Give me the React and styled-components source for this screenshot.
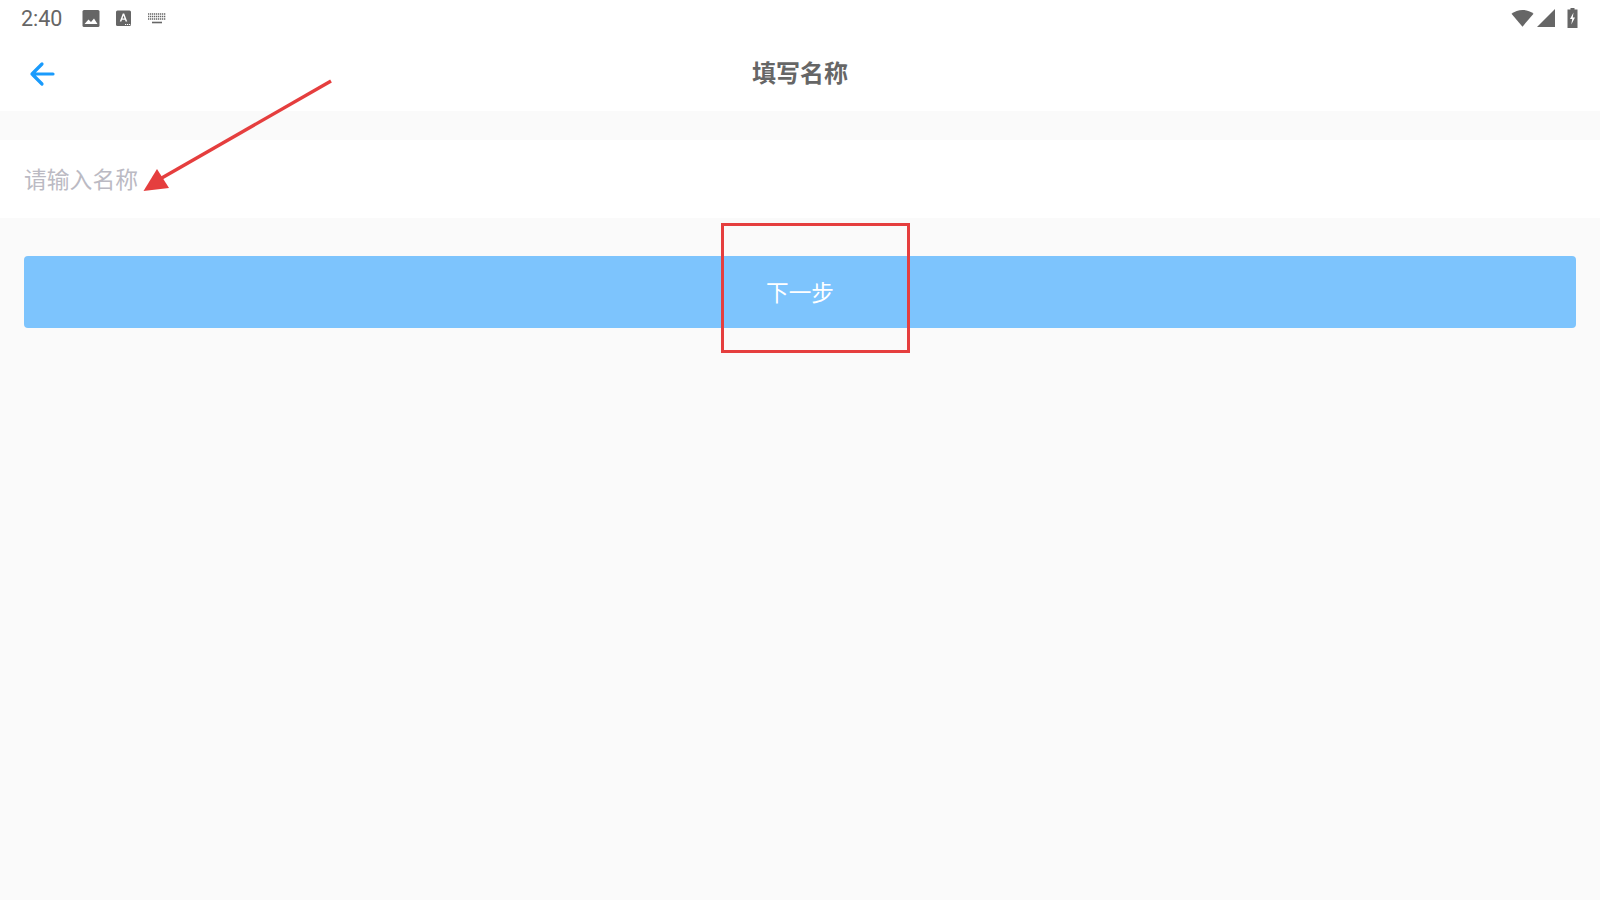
import React from "react";
import styled, { createGlobalStyle } from "styled-components";

const Global = createGlobalStyle`
  html, body { margin: 0; padding: 0; background: #fafafa; }
  #root { width: 1600px; height: 900px; overflow: hidden; }
`;
const CJK = `"Roboto", "Noto Sans CJK SC", sans-serif`;

const Page = styled.div`
  position: relative; width: 1600px; height: 900px; background: #fafafa;
  font-family: ${CJK}; display: flex; flex-direction: column;
`;
const StatusBar = styled.div`
  height: 36px; background: #fff; display: flex; align-items: center;
  justify-content: space-between; padding: 0 22px 0 21px; color: #666;
`;
const StatusGroup = styled.div`
  display: flex; align-items: center;
`;
const Time = styled.span`
  font-size: 21.5px; width: 61px; color: #666;
`;
const Header = styled.header`
  height: 75px; background: #fff; display: flex; align-items: center;
  justify-content: center; position: relative; margin-bottom: 29px;
`;
const BackButton = styled.button`
  position: absolute; left: 28px; top: 23px; width: 30px; height: 30px;
  padding: 0; border: 0; background: none; display: flex;
`;
const Title = styled.h1`
  margin: 0; font-size: 24px; font-weight: 700; color: #666; line-height: 1;
`;
const InputRow = styled.div`
  height: 78px; background: #fff; display: flex; align-items: center; padding: 4px 24px 0;
  box-sizing: border-box; margin-bottom: 38px;
`;
const NameInput = styled.input`
  flex: 1; border: 0; outline: 0; padding: 0; background: none; font-family: ${CJK};
  font-size: 22.8px; line-height: 1.4; color: #333;
  &::placeholder { color: #bbbac3; opacity: 1; }
`;
const NextButton = styled.button`
  margin: 0 24px; height: 72px; border: 0; border-radius: 4px; background: #7dc4fd;
  color: #fff; font-family: ${CJK}; font-size: 22.6px; padding: 0 0 1px;
`;
const HighlightBox = styled.div`
  position: absolute; left: 721px; top: 223px; width: 189px; height: 130px;
  box-sizing: border-box; border: 3px solid #e53e3e; pointer-events: none;
`;
const ArrowLayer = styled.svg`
  position: absolute; left: 0; top: 0; pointer-events: none;
`;

export default function App() {
  return (
    <Page>
      <Global />
      <StatusBar>
        <StatusGroup>
          <Time>2:40</Time>
          <StatusGroup>
            <svg width="18" height="18" viewBox="0 0 18 18">
              <rect x="0.5" y="1" width="17" height="17" rx="1.5" fill="#666" />
              <path d="M2.5 15 L6.5 10.5 L9 13 L12 9.5 L15.5 15 Z" fill="#fff" />
            </svg>
            <svg width="16" height="16" viewBox="0 0 16 16" style={{ marginLeft: 16 }}>
              <rect x="0" y="0.5" width="15" height="15.5" rx="1.5" fill="#666" />
              <path d="M3.8 11.5 L6.8 3.5 H8.2 L11.2 11.5 H9.6 L9 9.8 H6 L5.4 11.5 Z M6.5 8.5 H8.5 L7.5 5.6 Z" fill="#fff" fillRule="evenodd" />
              <path d="M9 14h1.2v1H9zM11 14h1.2v1H11zM13 14h1.2v1H13z" fill="#fff" />
            </svg>
            <svg width="20" height="14" viewBox="0 0 20 14" style={{ marginLeft: 15 }}>
              <path d="M1 3h18M1 5.5h18M1 8h18" stroke="#666" strokeWidth="1.7" strokeDasharray="1.3 0.7" fill="none" />
              <path d="M5 11.5h10" stroke="#666" strokeWidth="1.6" />
            </svg>
          </StatusGroup>
        </StatusGroup>
        <StatusGroup>
          <svg width="23" height="18" viewBox="0 0 24 18">
            <path d="M0.5 4.5 C7 -0.8 17 -0.8 23.5 4.5 L12 18 Z" fill="#666" />
          </svg>
          <svg width="19" height="19" viewBox="0 0 19 19" style={{ marginLeft: 3 }}>
            <path d="M0 18 L18 0 V18 Z" fill="#666" />
          </svg>
          <svg width="11" height="20" viewBox="0 0 11 20" style={{ marginLeft: 11 }}>
            <path d="M3.5 0 h4 v1.5 h3 v18.5 h-10 v-18.5 h3 Z" fill="#666" />
            <path d="M6.5 4.5 L3 11 H5.2 L4.3 16.5 L8 9.4 H5.8 Z" fill="#fff" />
          </svg>
        </StatusGroup>
      </StatusBar>
      <Header>
        <BackButton aria-label="返回">
          <svg width="30" height="30" viewBox="0 0 30 30">
            <path d="M4 15 H25 M14 5 L4 15 L14 25" fill="none" stroke="#1a9bfc" strokeWidth="3.2" strokeLinecap="round" strokeLinejoin="round" />
          </svg>
        </BackButton>
        <Title>填写名称</Title>
      </Header>
      <InputRow>
        <NameInput placeholder="请输入名称" />
      </InputRow>
      <NextButton>下一步</NextButton>
      <HighlightBox />
      <ArrowLayer width="1600" height="900" viewBox="0 0 1600 900">
        <path d="M331 81 L160 179" stroke="#e53e3e" strokeWidth="3.4" fill="none" />
        <path d="M143.5 191 L157 169 L169 188 Z" fill="#e53e3e" />
      </ArrowLayer>
    </Page>
  );
}
